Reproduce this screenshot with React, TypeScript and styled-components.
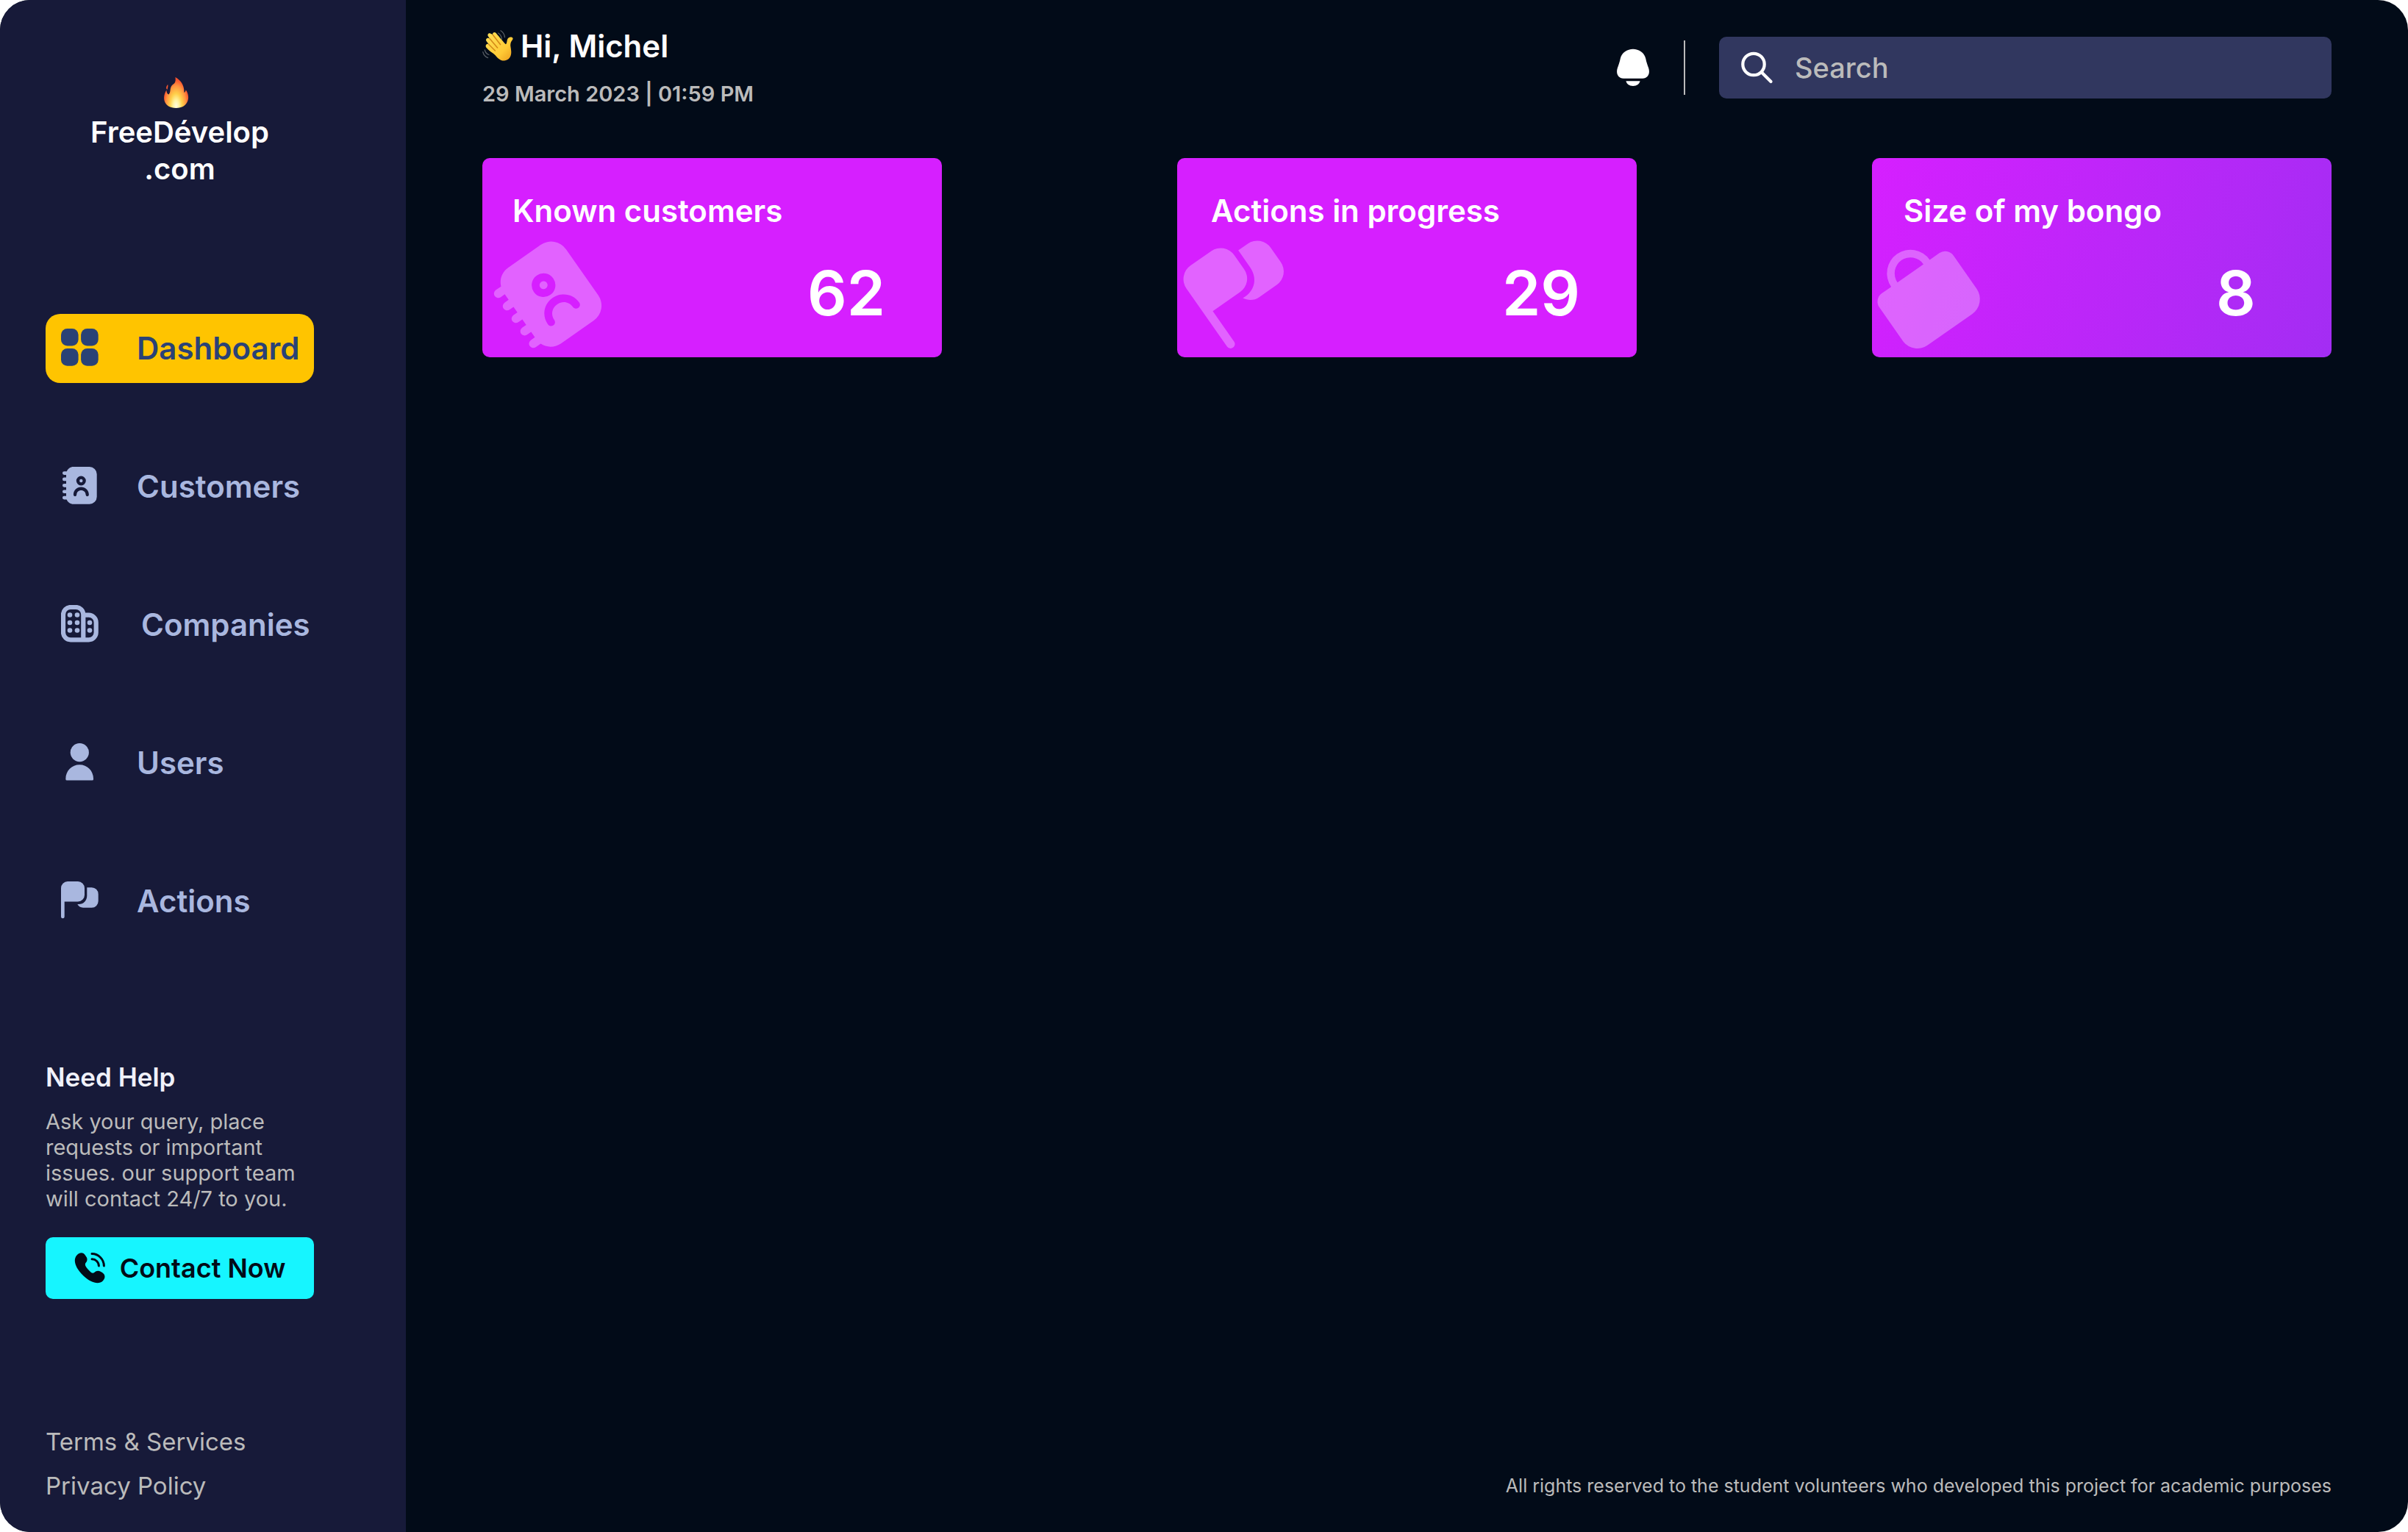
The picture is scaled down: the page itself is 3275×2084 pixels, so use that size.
import React from "react";
import styled, { createGlobalStyle } from "styled-components";

const GlobalStyle = createGlobalStyle`
  *, *::before, *::after { box-sizing: border-box; }
  body { margin: 0; background: #ffffff; font-family: Inter, "Liberation Sans", sans-serif; }
  h1, h2, p { margin: 0; }
  a { color: inherit; text-decoration: none; }
  svg { display: block; flex: none; }
`;

const Shell = styled.div`
  display: flex;
  min-height: 100vh;
  background: #020b18;
  border-radius: 41px;
  overflow: hidden;
`;

/* ---------- sidebar ---------- */

const Sidebar = styled.aside`
  flex: none;
  width: 552px;
  padding: 105px 125px 43px 62px;
  display: flex;
  flex-direction: column;
  background: #171a39;
`;

const Brand = styled.a`
  display: flex;
  flex-direction: column;
  align-items: center;
  color: #ffffff;
  font-size: 40px;
  line-height: 50px;
  font-weight: 600;
  text-align: center;
`;

const Nav = styled.nav`
  margin-top: 172px;
  display: flex;
  flex-direction: column;
  gap: 94px;
`;

const NavLink = styled.a<{ $active?: boolean }>`
  display: flex;
  align-items: center;
  gap: 51px;
  height: 94px;
  padding-left: 21px;
  border-radius: 20px;
  font-size: 42px;
  line-height: 50px;
  font-weight: 600;
  white-space: nowrap;
  && { color: ${(p) => (p.$active ? "#2a4276" : "#a9b7df")}; }
  background: ${(p) => (p.$active ? "#ffc400" : "transparent")};
`;

const Help = styled.section`
  margin-top: 171px;
`;

const HelpTitle = styled.h2`
  color: #f0f1fa;
  font-size: 35px;
  line-height: 42px;
  font-weight: 600;
`;

const HelpText = styled.p`
  margin-top: 22px;
  color: #bbbbbb;
  font-size: 29px;
  line-height: 35px;
  white-space: nowrap;
`;

const ContactButton = styled.button`
  margin-top: 35px;
  width: 100%;
  height: 84px;
  padding: 0;
  display: flex;
  align-items: center;
  justify-content: center;
  gap: 20px;
  border: 0;
  border-radius: 10px;
  background: #16f5ff;
  color: #020b18;
  font: 600 36px/42px Inter, "Liberation Sans", sans-serif;
`;

const Legal = styled.div`
  margin-top: auto;
  display: flex;
  flex-direction: column;
  gap: 20px;
  color: #bbbbbb;
  font-size: 33px;
  line-height: 40px;
`;

/* ---------- main ---------- */

const Main = styled.main`
  flex: 1;
  min-width: 0;
  padding: 38px 104px 48px;
  display: flex;
  flex-direction: column;
`;

const Header = styled.header`
  display: flex;
  align-items: center;
  justify-content: space-between;
`;

const Greeting = styled.div`
  display: flex;
  flex-direction: column;
  gap: 22px;
`;

const Hello = styled.h1`
  display: flex;
  align-items: center;
  gap: 8px;
  color: #ffffff;
  font-size: 42px;
  line-height: 50px;
  font-weight: 600;
`;

const DateLine = styled.p`
  color: #bbbbbb;
  font-size: 29px;
  line-height: 36px;
  font-weight: 600;
`;

const Tools = styled.div`
  display: flex;
  align-items: center;
  gap: 46px;
`;

const BellButton = styled.button`
  padding: 0;
  border: 0;
  background: none;
`;

const Divider = styled.span`
  width: 2px;
  height: 74px;
  background: #bbbbbb;
`;

const SearchBox = styled.label`
  display: flex;
  align-items: center;
  gap: 29px;
  width: 833px;
  height: 84px;
  padding: 0 30px;
  border-radius: 10px;
  background: #31375f;
`;

const SearchInput = styled.input`
  flex: 1;
  min-width: 0;
  padding: 0;
  border: 0;
  outline: 0;
  background: none;
  color: #ffffff;
  font: 500 38px/46px Inter, "Liberation Sans", sans-serif;
  &::placeholder { color: #bbbbbb; opacity: 1; }
`;

const Cards = styled.section`
  margin-top: 69px;
  display: flex;
  justify-content: space-between;
`;

const Card = styled.article<{ $fill: string; $indent: number }>`
  position: relative;
  width: 625px;
  padding: 47px 75px 37px ${(p) => p.$indent}px;
  display: flex;
  flex-direction: column;
  gap: 37px;
  border-radius: 10px;
  background: ${(p) => p.$fill};
  color: #ffffff;
`;

const CardArt = styled.svg`
  position: absolute;
  left: 0;
  bottom: 0;
`;

const CardTitle = styled.h2`
  font-size: 42px;
  line-height: 50px;
  font-weight: 600;
`;

const CardValue = styled.p`
  align-self: flex-end;
  min-width: 110px;
  text-align: center;
  font-size: 84px;
  line-height: 100px;
  font-weight: 600;
`;

const Copyright = styled.footer`
  margin-top: auto;
  color: #bbbbbb;
  font-size: 25px;
  line-height: 30px;
  text-align: right;
`;

/* ---------- drawings ---------- */

const GridShape = () => (
  <g fill="currentColor">
    <rect x="0" y="0" width="23.6" height="23.6" rx="8.5" />
    <rect x="27.1" y="0" width="23.6" height="23.6" rx="8.5" />
    <rect x="0" y="27.1" width="23.6" height="23.6" rx="8.5" />
    <rect x="27.1" y="27.1" width="23.6" height="23.6" rx="8.5" />
  </g>
);

const BOOK_BODY =
  "M17 0H38.7a10 10 0 0 1 10 10V40.7a10 10 0 0 1-10 10H17c-4.4 0-8-2.6-9.4-6.3H4.3a2.35 2.35 0 0 1 0-4.7H7V36.1H4.3a2.35 2.35 0 0 1 0-4.7H7V27.7H4.3a2.35 2.35 0 0 1 0-4.7H7V19.3H4.3a2.35 2.35 0 0 1 0-4.7H7V10.9H4.3a2.35 2.35 0 0 1 0-4.7H7.8C9.2 2.6 12.7 0 17 0Z";
const BOOK_HEAD = "M27.3 12.5a6.5 6.5 0 1 1 0 13a6.5 6.5 0 0 1 0-13Zm0 4.3a2.2 2.2 0 1 0 0 4.4a2.2 2.2 0 0 0 0-4.4Z";
const BOOK_ARC =
  "M16.9 38C16.9 32 21.5 27.6 27.3 27.6S37.9 32 37.9 38a2.15 2.15 0 0 1-4.3 0C33.6 34.4 30.9 31.9 27.4 31.9S21.2 34.4 21.2 38a2.15 2.15 0 0 1-4.3 0Z";

const BookShape = () => <path fill="currentColor" fillRule="evenodd" d={BOOK_BODY + BOOK_HEAD + BOOK_ARC} />;

const BuildingShape = () => (
  <g>
    <g fill="none" stroke="currentColor" strokeWidth="6.2">
      <path d="M30.3 47.3V13a10 10 0 0 0-10-10H13A10 10 0 0 0 3 13V37.3a10 10 0 0 0 10 10H37.7a10 10 0 0 0 10-10V23.7a10 10 0 0 0-10-10H30.3" />
    </g>
    <g fill="currentColor">
      {[[12, 13.5], [22, 13.5], [12, 24], [22, 24], [12, 34.5], [22, 34.5], [39, 24], [39, 34.5]].map(([x, y]) => (
        <circle key={`${x}-${y}`} cx={x} cy={y} r="3.3" />
      ))}
    </g>
  </g>
);

const UserShape = () => (
  <g fill="currentColor">
    <circle cx="25.3" cy="12.6" r="12.6" />
    <path d="M8 50.6q-1.7 0-1.7-1.9C6.3 37.5 14.8 29.3 25.2 29.3S44.1 37.5 44.1 48.7q0 1.9-1.7 1.9Z" />
  </g>
);

const FlagsShape = () => (
  <g fill="currentColor">
    <path d="M9 0H23a9 9 0 0 1 9 9V18.5a9 9 0 0 1-9 9H4.7V47.9a2.35 2.35 0 0 1-4.7 0V9a9 9 0 0 1 9-9Z" />
    <path d="M35.3 8.2H41.7a9 9 0 0 1 9 9V26.8a9 9 0 0 1-9 9H30c-3.4 0-6-1.8-7.7-4.7H24c6.6 0 11.3-4.7 11.3-11.8Z" />
  </g>
);

const BagShape = () => (
  <g fill="currentColor">
    <path
      fillRule="evenodd"
      d="M6.5 12.9H12.8a12.9 12.9 0 0 1 25.8 0H45a5.6 5.6 0 0 1 5.6 5.6V40.6a10 10 0 0 1-10 10H10.8a9.8 9.8 0 0 1-9.8-9V18.4a5.5 5.5 0 0 1 5.5-5.5ZM17 12.9H34.4a8.7 8.7 0 0 0-17.4 0Z"
    />
  </g>
);

const NavIcon = ({ width = 52, children }: { width?: number; children: React.ReactNode }) => (
  <svg width={width} height="54" viewBox={`0 0 ${width} 54`} aria-hidden="true">
    {children}
  </svg>
);

const FlameIcon = () => (
  <svg width="50" height="50" viewBox="0 0 50 50" aria-hidden="true">
    <defs>
      <radialGradient
        id="flame"
        gradientUnits="userSpaceOnUse"
        cx="0"
        cy="0"
        r="1"
        gradientTransform="translate(19.5 39) scale(20 40)"
      >
        <stop offset="0" stopColor="#fffbe0" />
        <stop offset="0.2" stopColor="#fff3a0" />
        <stop offset="0.42" stopColor="#ffcf4a" />
        <stop offset="0.68" stopColor="#ff9440" />
        <stop offset="0.88" stopColor="#f9552f" />
        <stop offset="1" stopColor="#f0502f" />
      </radialGradient>
    </defs>
    <path
      fill="url(#flame)"
      d="M18.4 0C26 4 31 11.5 30.4 21C32 20 32.6 18.6 32.8 17.3C35.8 21.5 37 27.5 35.4 32C33.2 38.4 27.5 42 19.5 42S5.4 38.4 3.6 32C2.3 27 3.6 22 6.4 17.5C6.4 20.5 7.3 22.8 9.4 23.6C12.4 20.5 10.8 17 12.8 12.8C14.4 9.4 17.2 9.6 18.2 6.5C18.9 4.3 18.8 2 18.4 0ZM8.2 10C8.9 12.8 7.8 13.8 7.7 16.6C5.4 16 5.8 12.6 8.2 10Z"
    />
  </svg>
);

const WaveIcon = () => (
  <svg width="44" height="44" viewBox="0 0 44 44" aria-hidden="true">
    <defs>
      <linearGradient id="hand" x1="0" y1="0" x2="1" y2="1">
        <stop offset="0" stopColor="#ffe05a" />
        <stop offset="0.65" stopColor="#ffca35" />
        <stop offset="1" stopColor="#e99a1c" />
      </linearGradient>
    </defs>
    <path
      fill="url(#hand)"
      d="M17.5 34C21 38.5 25 42 30 41.5C36 41 39.6 36 39.3 29.5C39 23 37.6 21.5 38.6 17.5C39.3 14.5 42.3 13 41.4 10.8C40.3 8.8 36.5 9.2 34.8 11.2C33 13.4 34 17.5 32 19.2C30 18 22.5 8.5 18.6 4C17 2 13.4 3.3 14.2 6L10.8 4.4C8.5 3.6 6.3 6 8 8.6L10 11.5C7 9.7 4 12 5.4 14.8L8.5 19C6 18 3.6 20.6 5.2 23.4C8.5 28 14 30.5 17.5 34Z"
    />
    <g fill="none" stroke="#d48a18" strokeWidth="1.6" strokeLinecap="round">
      <path d="M14.4 6.4L24.5 19.6" />
      <path d="M10 11.6L20.6 24" />
      <path d="M8.6 19.2L17.4 28" />
    </g>
    <g fill="none" stroke="#555b63" strokeWidth="1.3" strokeLinecap="round">
      <path d="M21.5 4C24 5.5 26 8.5 26.5 12" />
      <path d="M25 .8C28 2.6 30 5.8 30.5 9.6" />
      <path d="M3.3 27C4 30 6 32.5 9 33.5" />
      <path d="M.8 29.6C1.6 33.4 4 36.3 7.6 37.6" />
    </g>
  </svg>
);

const PhoneIcon = () => (
  <svg width="42" height="42" viewBox="0 0 42 42" aria-hidden="true">
    <path
      fill="currentColor"
      d="M3.5 3.5C7.5-.9 12.3-.6 14.9 3.4L16.6 6C18.2 8.6 17.6 11.4 15.8 13.6C13.8 16 15 18.5 18.7 22.8C22.6 27 24.8 29 27.3 27C29.8 24.6 32.6 24 35.3 25.5L38 27C42.2 29.6 42.8 34.4 38.8 38.4C33.5 43.7 23 41.5 12.5 31.5C1.5 21-2.3 10 3.5 3.5Z"
    />
    <g fill="none" stroke="currentColor" strokeWidth="3" strokeLinecap="round">
      <path d="M24 1.6A16.6 16.6 0 0 1 40.4 18" />
      <path d="M24 8.8A9.4 9.4 0 0 1 33.4 18" />
    </g>
  </svg>
);

const BellIcon = () => (
  <svg width="46" height="52" viewBox="0 0 46 52" aria-hidden="true">
    <g fill="#ffffff">
      <path d="M23 .7C31 .7 38.5 5.8 40.2 13.5C41.2 18.5 42.4 21.5 44.2 26.8C46.5 34 43.2 40.7 36 40.7H10C2.8 40.7-.5 34 1.8 26.8C3.6 21.5 4.8 18.5 5.8 13.5C7.5 5.8 15 .7 23 .7Z" />
      <path d="M13.4 44.3H32.6Q31 51 23 51T13.4 44.3Z" />
    </g>
  </svg>
);

const SearchIcon = () => (
  <svg width="44" height="44" viewBox="0 0 44 44" aria-hidden="true">
    <g fill="none" stroke="#ffffff" strokeWidth="4.2" strokeLinecap="round">
      <circle cx="17" cy="17.5" r="14.7" />
      <path d="M28 28.5L40.5 41" />
    </g>
  </svg>
);

/* ---------- content ---------- */

const NAV = [
  { label: "Dashboard", shape: <GridShape />, active: true },
  { label: "Customers", shape: <BookShape /> },
  { label: "Companies", shape: <BuildingShape />, iconWidth: 58 },
  { label: "Users", shape: <UserShape /> },
  { label: "Actions", shape: <FlagsShape /> },
];

const PINK = "#d61fff";

const CARDS = [
  { title: "Known customers", value: 62, shape: <BookShape />, center: [92, 100], fill: PINK, indent: 41 },
  { title: "Actions in progress", value: 29, shape: <FlagsShape />, center: [91, 86], fill: PINK, indent: 46 },
  {
    title: "Size of my bongo",
    value: 8,
    shape: <BagShape />,
    center: [73, 94],
    fill: `linear-gradient(110deg, ${PINK}, #a32df3)`,
    indent: 43,
  },
];

export default function App() {
  return (
    <>
      <GlobalStyle />
      <Shell>
        <Sidebar>
          <Brand href="#">
            <FlameIcon />
            <span>
              FreeDévelop
              <br />
              .com
            </span>
          </Brand>
          <Nav aria-label="Main">
            {NAV.map((item) => (
              <NavLink key={item.label} href="#" $active={item.active} aria-current={item.active ? "page" : undefined}>
                <NavIcon width={item.iconWidth}>{item.shape}</NavIcon>
                {item.label}
              </NavLink>
            ))}
          </Nav>
          <Help>
            <HelpTitle>Need Help</HelpTitle>
            <HelpText>
              Ask your query, place
              <br />
              requests or important
              <br />
              issues. our support team
              <br />
              will contact 24/7 to you.
            </HelpText>
            <ContactButton type="button">
              <PhoneIcon />
              Contact Now
            </ContactButton>
          </Help>
          <Legal>
            <a href="#">Terms &amp; Services</a>
            <a href="#">Privacy Policy</a>
          </Legal>
        </Sidebar>
        <Main>
          <Header>
            <Greeting>
              <Hello>
                <WaveIcon />
                Hi, Michel
              </Hello>
              <DateLine>29 March 2023 | 01:59 PM</DateLine>
            </Greeting>
            <Tools>
              <BellButton type="button" aria-label="Notifications">
                <BellIcon />
              </BellButton>
              <Divider />
              <SearchBox>
                <SearchIcon />
                <SearchInput type="search" placeholder="Search" aria-label="Search" />
              </SearchBox>
            </Tools>
          </Header>
          <Cards>
            {CARDS.map((card) => (
              <Card key={card.title} $fill={card.fill} $indent={card.indent}>
                <CardArt width="180" height="180" viewBox="0 0 180 180" aria-hidden="true">
                  <g
                    color="#ffffff"
                    opacity="0.3"
                    transform={`translate(${card.center.join(" ")}) rotate(-35) scale(2.48) translate(-26 -27)`}
                  >
                    {card.shape}
                  </g>
                </CardArt>
                <CardTitle>{card.title}</CardTitle>
                <CardValue>{card.value}</CardValue>
              </Card>
            ))}
          </Cards>
          <Copyright>
            All rights reserved to the student volunteers who developed this project for academic purposes
          </Copyright>
        </Main>
      </Shell>
    </>
  );
}
